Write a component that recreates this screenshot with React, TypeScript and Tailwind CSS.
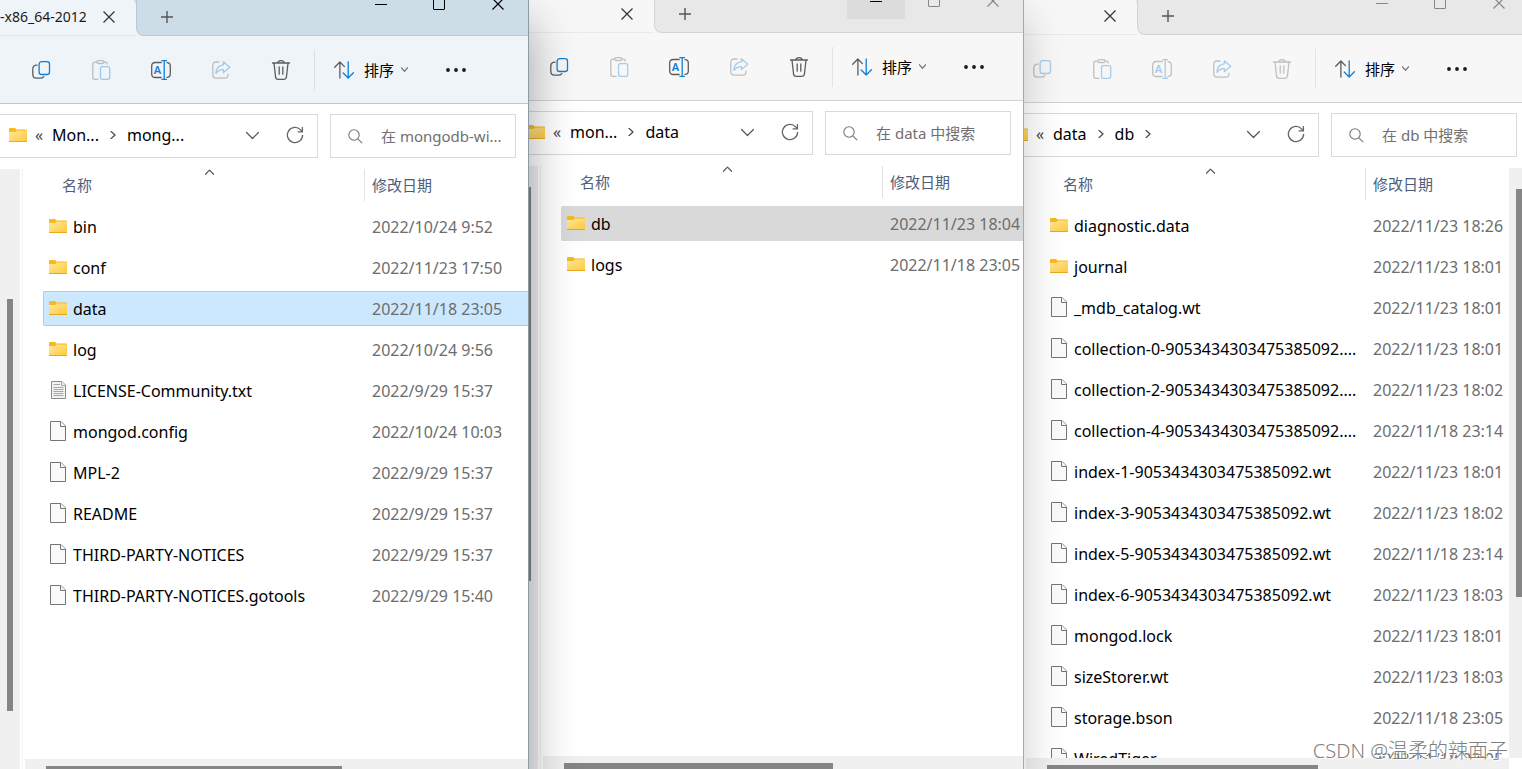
import { Fragment } from "react"
import type { ReactNode } from "react"

type FileKind = 'folder' | 'file' | 'text'

interface Entry {
  name: string
  date: string
  kind: FileKind
}

interface Theme {
  active: string
  bar: string
  line: string
  controls: string
}

interface ExplorerProps {
  label: string
  frame: string
  offset: string
  theme: Theme
  title?: string
  path: string[]
  openPath?: boolean
  placeholder: string
  entries: Entry[]
  selected?: string
  selectedStyle?: string
  minimizeHover?: boolean
  hasSelection?: boolean
  navThumb: string
  listThumb?: string
  bottomThumb: string
}

const activeTheme: Theme = {
  active: 'bg-[#eff4f8]',
  bar: 'bg-[#ccdde8]',
  line: 'border-[#b9c9d5]',
  controls: 'text-black',
}

const idleTheme: Theme = {
  active: 'bg-[#f7f7f7]',
  bar: 'bg-[#e8e8e8]',
  line: 'border-[#d3d3d3]',
  controls: 'text-[#868686]',
}

const mongoEntries: Entry[] = [
  { name: 'bin', date: '2022/10/24 9:52', kind: 'folder' },
  { name: 'conf', date: '2022/11/23 17:50', kind: 'folder' },
  { name: 'data', date: '2022/11/18 23:05', kind: 'folder' },
  { name: 'log', date: '2022/10/24 9:56', kind: 'folder' },
  { name: 'LICENSE-Community.txt', date: '2022/9/29 15:37', kind: 'text' },
  { name: 'mongod.config', date: '2022/10/24 10:03', kind: 'file' },
  { name: 'MPL-2', date: '2022/9/29 15:37', kind: 'file' },
  { name: 'README', date: '2022/9/29 15:37', kind: 'file' },
  { name: 'THIRD-PARTY-NOTICES', date: '2022/9/29 15:37', kind: 'file' },
  { name: 'THIRD-PARTY-NOTICES.gotools', date: '2022/9/29 15:40', kind: 'file' },
]

const dataEntries: Entry[] = [
  { name: 'db', date: '2022/11/23 18:04', kind: 'folder' },
  { name: 'logs', date: '2022/11/18 23:05', kind: 'folder' },
]

const dbEntries: Entry[] = [
  { name: 'diagnostic.data', date: '2022/11/23 18:26', kind: 'folder' },
  { name: 'journal', date: '2022/11/23 18:01', kind: 'folder' },
  { name: '_mdb_catalog.wt', date: '2022/11/23 18:01', kind: 'file' },
  { name: 'collection-0-9053434303475385092....', date: '2022/11/23 18:01', kind: 'file' },
  { name: 'collection-2-9053434303475385092....', date: '2022/11/23 18:02', kind: 'file' },
  { name: 'collection-4-9053434303475385092....', date: '2022/11/18 23:14', kind: 'file' },
  { name: 'index-1-9053434303475385092.wt', date: '2022/11/23 18:01', kind: 'file' },
  { name: 'index-3-9053434303475385092.wt', date: '2022/11/23 18:02', kind: 'file' },
  { name: 'index-5-9053434303475385092.wt', date: '2022/11/18 23:14', kind: 'file' },
  { name: 'index-6-9053434303475385092.wt', date: '2022/11/23 18:03', kind: 'file' },
  { name: 'mongod.lock', date: '2022/11/23 18:01', kind: 'file' },
  { name: 'sizeStorer.wt', date: '2022/11/23 18:03', kind: 'file' },
  { name: 'storage.bson', date: '2022/11/18 23:05', kind: 'file' },
  { name: 'WiredTiger', date: '2022/11/18 23:05', kind: 'file' },
]

const GRAY = '#5c5c5c'
const BLUE = '#0f7fd6'

function Icon({ children }: { children: ReactNode }) {
  return (
    <svg className="size-5 shrink-0" viewBox="0 0 20 20" fill="none" strokeWidth="1.3" strokeLinecap="round" strokeLinejoin="round" aria-hidden="true">
      {children}
    </svg>
  )
}

function CopyIcon() {
  return (
    <Icon>
      <path stroke={GRAY} d="M6 5.2C3.2 5.2 1.8 6.6 1.8 9.2V14.6C1.8 17 3.2 18.2 5.4 18.2H8.6C10.8 18.2 12 17.8 12.8 16.6" />
      <rect stroke={BLUE} x="8.1" y="1.7" width="10.4" height="12.8" rx="2.6" />
    </Icon>
  )
}

function PasteIcon() {
  return (
    <Icon>
      <path stroke={GRAY} d="M5.6 2.2H3.8C2.4 2.2 1.8 3 1.8 4.2V17.3C1.8 18.6 2.5 19.3 3.8 19.3H7M13 2.2H14.4C15.6 2.2 16.2 2.8 16.2 4" />
      <rect stroke={GRAY} x="5.8" y="0.7" width="7.2" height="2.8" rx="1.4" />
      <rect stroke={BLUE} x="9.5" y="6.6" width="9.2" height="12.7" rx="2" />
    </Icon>
  )
}

function RenameIcon() {
  return (
    <Icon>
      <path stroke={GRAY} d="M10.2 2.5H4.2C1.8 2.5 0.7 3.7 0.7 6V14C0.7 16.3 1.8 17.5 4.2 17.5H10.2M16 2.6C18.3 2.6 19.3 3.8 19.3 6V14C19.3 16.2 18.3 17.4 16 17.4" />
      <path stroke={BLUE} d="M10.9 0.7H15.5M13.2 0.7V19.3M10.9 19.3H15.5" />
      <text x="2.8" y="14" fontSize="11" fontWeight="600" fill={BLUE} stroke="none">A</text>
    </Icon>
  )
}

function ShareIcon() {
  return (
    <Icon>
      <path stroke={GRAY} d="M8 2H5C2.8 2 1.8 3.2 1.8 5.2V14.8C1.8 17 2.8 18.2 5 18.2H14C16.2 18.2 17 17 17 14.2" />
      <path stroke={BLUE} d="M12.4 1.8L18.8 7.2L12.4 12.5V9.6C9.2 9.4 7 10.6 5 13.4C5.2 8.4 8 5 12.4 4.8Z" />
    </Icon>
  )
}

function TrashIcon() {
  return (
    <Icon>
      <path stroke={GRAY} d="M1.5 3H18.5M6.8 2.8C7 1.4 8.2 0.7 10 0.7S13 1.4 13.2 2.8M3 3.2L4.6 17.2C4.8 18.6 5.5 19.3 6.9 19.3H13.1C14.5 19.3 15.2 18.6 15.4 17.2L17 3.2M8.2 7V14.2M11.8 7V14.2" />
    </Icon>
  )
}

function SortIcon() {
  return (
    <Icon>
      <path stroke={GRAY} d="M5.9 18V2M0.7 7.2L5.9 2L10.4 6.6" />
      <path stroke={BLUE} d="M14.2 2V18M9.2 13L14.2 18L19.4 12.8" />
    </Icon>
  )
}

function Chevron({ className, d }: { className: string; d: string }) {
  return (
    <svg className={`shrink-0 ${className}`} viewBox="0 0 12 12" fill="none" stroke="currentColor" strokeWidth="1.2" strokeLinecap="round" strokeLinejoin="round" aria-hidden="true">
      <path d={d} vectorEffect="non-scaling-stroke" />
    </svg>
  )
}

function CrossIcon() {
  return (
    <svg className="size-3" viewBox="0 0 12 12" stroke="currentColor" strokeWidth="1.2" aria-hidden="true">
      <path d="M0.5 0.5L11.5 11.5M11.5 0.5L0.5 11.5" />
    </svg>
  )
}

function FolderIcon() {
  return (
    <svg className="h-[14px] w-[18px] shrink-0" viewBox="0 0 18 14" aria-hidden="true">
      <defs>
        <linearGradient id="folder-body" x1="0" y1="0" x2="1" y2="1">
          <stop offset="0" stopColor="#ffe8a0" />
          <stop offset="1" stopColor="#ffc937" />
        </linearGradient>
      </defs>
      <path fill="#f8b91c" d="M0 0.8Q0 0 0.8 0H6L7.6 1.4H17.2Q18 1.4 18 2.2V5H0Z" />
      <path fill="url(#folder-body)" d="M0 4H6.2L7.8 2.4H18V14H0Z" />
      <path fill="#e9a91c" d="M0 13H18V13.4Q18 14 17.4 14H0.6Q0 14 0 13.4Z" />
    </svg>
  )
}

function FileIcon() {
  return (
    <svg className="h-5 w-4 shrink-0" viewBox="0 0 16 20" fill="#fafafa" stroke="#757575" aria-hidden="true">
      <path d="M0.5 0.5H11L15.5 5V19.5H0.5Z" />
      <path d="M10.5 0.5V5.5H15.5" />
    </svg>
  )
}

function TextFileIcon() {
  return (
    <svg className="h-5 w-4 shrink-0" viewBox="0 0 16 20" fill="#f2f2f2" stroke="#8c8c8c" aria-hidden="true">
      <path d="M1.5 1.5H12L15.5 5V18.5H1.5Z" />
      <path stroke="#a6a6a6" d="M11.5 1.5V5.5H15.5M3.5 4.5H10M3.5 7.5H13.5M3.5 9.5H13.5M3.5 11.5H13.5M3.5 13.5H13.5M3.5 15.5H13.5" />
    </svg>
  )
}

function EntryIcon({ kind }: { kind: FileKind }) {
  if (kind === 'folder') return <FolderIcon />
  if (kind === 'text') return <TextFileIcon />
  return <FileIcon />
}

function ToolButton({ label, disabled, children }: { label: string; disabled?: boolean; children: ReactNode }) {
  return (
    <button aria-label={label} disabled={disabled} className="flex h-10 w-[60px] shrink-0 items-center justify-center disabled:opacity-35">
      {children}
    </button>
  )
}

function VerticalScrollbar({ thumb }: { thumb: string }) {
  return (
    <div className="flex w-5 shrink-0 flex-col items-center bg-[#f0f0f0]">
      <div className={`w-[6px] shrink-0 bg-[#858585] ${thumb}`} />
    </div>
  )
}

function Explorer({
  label, frame, offset, theme, title, path, openPath, placeholder, entries, selected,
  selectedStyle = '', minimizeHover, hasSelection = true, navThumb, listThumb, bottomThumb,
}: ExplorerProps) {
  return (
    <section aria-label={label} className={`relative flex h-[calc(100vh+10px)] min-w-0 items-start overflow-hidden bg-white ${frame}`}>
      <div className={`flex h-[calc(100vh+24px)] min-w-0 flex-1 flex-col ${offset}`}>
        {/* タイトルバー */}
        <div className={`flex h-[50px] shrink-0 ${theme.active}`}>
          <div className={`flex w-[136px] shrink-0 items-end ${theme.bar}`}>
            <div className={`flex h-[38px] w-full items-center rounded-tr-lg border-b border-black/5 ${theme.active}`}>
              <span className="w-[86px] overflow-hidden text-sm leading-5 whitespace-nowrap text-[#1a1a1a]">{title}</span>
              <button aria-label="关闭标签页" className="ml-[17px] text-[#333]">
                <CrossIcon />
              </button>
            </div>
          </div>
          <div className={`flex flex-1 rounded-bl-lg border-b border-l ${theme.bar} ${theme.line}`}>
            <button aria-label="新标签页" className="flex w-[60px] items-end justify-center pb-3 text-[#555]">
              <svg className="size-3" viewBox="0 0 12 12" stroke="currentColor" strokeWidth="1.4" aria-hidden="true">
                <path d="M6 0V12M0 6H12" />
              </svg>
            </button>
            <div className={`ml-auto flex h-9 ${theme.controls}`}>
              <button aria-label="最小化" className={`flex w-[58px] items-center justify-center ${minimizeHover ? 'bg-[#dcdcdc] text-black' : ''}`}>
                <span className="h-px w-3 bg-current" />
              </button>
              <button aria-label="最大化" className="flex w-[58px] items-center justify-center">
                <span className="size-3 rounded-[1px] border border-current" />
              </button>
              <button aria-label="关闭" className="flex w-[60px] items-center justify-center">
                <CrossIcon />
              </button>
            </div>
          </div>
        </div>

        {/* ツールバー */}
        <div className={`flex h-[68px] shrink-0 items-center border-b pl-[11px] ${theme.active} ${theme.line}`}>
          <ToolButton label="复制" disabled={!hasSelection}><CopyIcon /></ToolButton>
          <ToolButton label="粘贴" disabled><PasteIcon /></ToolButton>
          <ToolButton label="重命名" disabled={!hasSelection}><RenameIcon /></ToolButton>
          <ToolButton label="共享" disabled><ShareIcon /></ToolButton>
          <ToolButton label="删除" disabled={!hasSelection}><TrashIcon /></ToolButton>
          <div className="ml-[3px] h-10 w-px shrink-0 bg-black/8" />
          <button className="ml-[19px] flex h-10 shrink-0 items-center text-[15px] leading-5 text-black">
            <SortIcon />
            <span className="ml-[10px]">排序</span>
            <Chevron className="ml-[7px] size-[7px] text-[#777]" d="M0.5 3L6 9L11.5 3" />
          </button>
          <button aria-label="更多" className="ml-[38px] flex h-10 shrink-0 items-center">
            <svg className="h-1 w-5" viewBox="0 0 20 4" fill="#1a1a1a" aria-hidden="true">
              <circle cx="2" cy="2" r="1.9" />
              <circle cx="10" cy="2" r="1.9" />
              <circle cx="18" cy="2" r="1.9" />
            </svg>
          </button>
        </div>

        {/* アドレスバーと検索 */}
        <div className="flex shrink-0 gap-3 pt-[10px] pr-3 pb-[11px]">
          <nav aria-label="地址栏" className="flex h-11 min-w-0 flex-1 items-center border border-l-0 border-[#d9d9d9] pb-0.5 pl-[9px] text-base leading-5 text-black">
            <FolderIcon />
            <span className="ml-2 w-[17px] shrink-0 text-[#444]">«</span>
            {path.map((part, i) => (
              <Fragment key={part}>
                {i > 0 && <Chevron className="mx-[10px] size-[8px] text-[#444]" d="M3 0.5L9 6L3 11.5" />}
                <button className="whitespace-nowrap">{part}</button>
              </Fragment>
            ))}
            {openPath && <Chevron className="mx-[10px] size-[8px] text-[#444]" d="M3 0.5L9 6L3 11.5" />}
            <button aria-label="历史记录" className="ml-auto text-[#555]">
              <Chevron className="size-[13px]" d="M0.5 3.2L6 8.8L11.5 3.2" />
            </button>
            <button aria-label="刷新" className="mr-[13px] ml-[27px] text-[#666]">
              <svg className="size-[18px]" viewBox="0 0 18 18" fill="none" stroke="currentColor" strokeWidth="1.3" aria-hidden="true">
                <path d="M16.6 9A7.6 7.6 0 1 1 14.6 3.9L16.2 5.6M16.4 1V5.8H11.6" />
              </svg>
            </button>
          </nav>
          <label className="flex h-11 w-[186px] shrink-0 items-center border border-[#d9d9d9] pl-[17px]">
            <svg className="size-[15px] shrink-0" viewBox="0 0 15 15" fill="none" stroke="#777" strokeWidth="1.1" aria-hidden="true">
              <circle cx="6" cy="6" r="5.2" />
              <path d="M9.8 9.8L14.2 14.2" />
            </svg>
            <input type="search" aria-label="搜索" placeholder={placeholder} className="ml-[18px] min-w-0 flex-1 text-[15px] leading-5 outline-none placeholder:text-[#707070]" />
          </label>
        </div>

        {/* ナビゲーションとファイル一覧 */}
        <div className="flex min-h-0 flex-1">
          <VerticalScrollbar thumb={navThumb} />
          <div className="ml-[2px] flex min-w-0 flex-1 flex-col border-l border-[#f2f2f2]">
            <div className="flex min-h-0 flex-1">
              <div className="min-w-0 flex-1 overflow-hidden pl-5">
                <table className="w-full table-fixed border-collapse text-left">
                  <thead>
                    <tr className="h-[37px] align-top text-[15px] leading-5 text-[#4c607a]">
                      <th className="relative w-[321px] p-0 font-normal">
                        <span className="flex h-8 items-center pl-[19px]">名称</span>
                        {/* 並び替えの向き */}
                        <Chevron className="absolute top-0 left-[162px] size-[9px] text-[#555]" d="M0.5 7L6 1.5L11.5 7" />
                      </th>
                      <th className="p-0 font-normal">
                        <span className="flex h-8 items-center border-l border-[#e3e3e3] pl-[7px]">修改日期</span>
                      </th>
                    </tr>
                  </thead>
                  <tbody>
                    {entries.map((entry) => {
                      const style = entry.name === selected ? selectedStyle : 'border-transparent'
                      return (
                        <tr key={entry.name}>
                          <td className="h-[41px] p-0">
                            <div className={`flex h-[35px] items-center rounded-l-xs border-y border-l pl-[5px] text-base leading-6 whitespace-nowrap text-black ${style}`}>
                              <span className="flex w-[18px] shrink-0 justify-center pb-0.5">
                                <EntryIcon kind={entry.kind} />
                              </span>
                              <span className="ml-[6px]">{entry.name}</span>
                            </div>
                          </td>
                          <td className="h-[41px] p-0">
                            <div className={`flex h-[35px] items-center border-y pl-2 text-base leading-6 whitespace-nowrap text-[#6d6d6d] ${style}`}>
                              {entry.date}
                            </div>
                          </td>
                        </tr>
                      )
                    })}
                  </tbody>
                </table>
              </div>
              {listThumb && <VerticalScrollbar thumb={listThumb} />}
            </div>
            <div className={`ml-[2px] flex h-5 shrink-0 items-center bg-[#f0f0f0] pl-[21px] ${listThumb ? 'mr-5' : ''}`}>
              <div className={`h-[6px] bg-[#858585] ${bottomThumb}`} />
            </div>
          </div>
        </div>
      </div>
    </section>
  )
}

function App() {
  return (
    <main className="relative grid h-screen grid-cols-[529fr_495fr_498fr] overflow-hidden font-['Noto_Sans','Noto_Sans_CJK_SC',sans-serif]">
      <Explorer
        label="mongodb"
        frame="z-20 border-r border-[#8f9ba3] shadow-[0_24px_44px_rgba(0,0,0,0.36)]"
        offset="-mt-[14px]"
        theme={activeTheme}
        title="-x86_64-2012"
        path={['Mon...', 'mong...']}
        placeholder="在 mongodb-wi..."
        entries={mongoEntries}
        selected="data"
        selectedStyle="bg-[#cce8ff] border-[#99d1ff]"
        navThumb="mt-[130px] h-[412px]"
        bottomThumb="w-[296px]"
      />
      <Explorer
        label="data"
        frame="z-10 border-r border-[#a8a8a8] shadow-[0_16px_40px_rgba(0,0,0,0.2)]"
        offset="-mt-[17px] -ml-[11px]"
        theme={idleTheme}
        path={['mon...', 'data']}
        placeholder="在 data 中搜索"
        entries={dataEntries}
        selected="db"
        selectedStyle="bg-[#d9d9d9] border-[#d9d9d9]"
        minimizeHover
        navThumb="mt-[21px] h-[394px]"
        bottomThumb="w-[269px]"
      />
      <Explorer
        label="db"
        frame=""
        offset="-mt-[15px] -mr-[7px] -ml-[23px]"
        theme={idleTheme}
        path={['data', 'db']}
        openPath
        placeholder="在 db 中搜索"
        entries={dbEntries}
        hasSelection={false}
        navThumb="mt-[21px] h-[394px]"
        listThumb="mt-[21px] h-[408px]"
        bottomThumb="w-[271px]"
      />
      <p className="absolute right-[14px] bottom-[6px] z-30 text-xl leading-6 font-light whitespace-nowrap text-[#808080] [text-shadow:1px_1px_0_#fff]">
        CSDN @温柔的辣面子
      </p>
    </main>
  )
}

export default App
